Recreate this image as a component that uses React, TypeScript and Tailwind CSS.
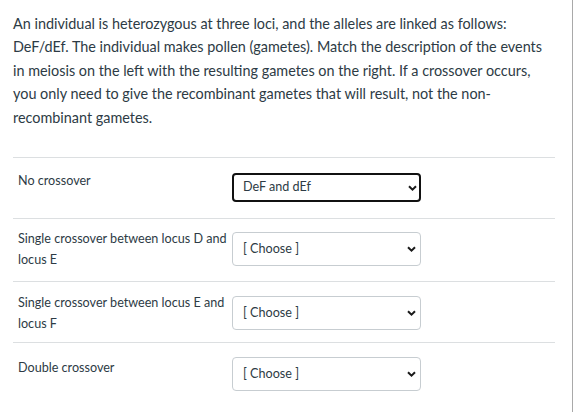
import React from "react";

const Chevron = () => (
  <svg width="9" height="6" viewBox="0 0 9 6" className="shrink-0">
    <path d="M1 1.2 L4.5 4.6 L8 1.2" fill="none" stroke="#1a1a1a" strokeWidth="2" />
  </svg>
);

function Select({ value, focused }: { value: string; focused?: boolean }) {
  return (
    <div
      className={
        focused
          ? "w-[189px] h-[29px] rounded-[4px] border-2 border-[#111] bg-white flex items-center justify-between pl-[9px] pr-[2px] text-[12.6px] text-[#2d3b45]"
          : "w-[189px] h-[34px] rounded-[4px] border border-[#c7cdd1] bg-white flex items-center justify-between pl-[10px] pr-[4px] text-[12.6px] text-[#2d3b45]"
      }
    >
      <span>{value}</span>
      <Chevron />
    </div>
  );
}

export default function App() {
  return (
    <div className="w-[574px] h-[412px] bg-white flex" style={{ fontFamily: "Lato, 'Open Sans', sans-serif" }}>
      <div className="w-[573px] h-full border-r border-[#a9a9a9]">
        <div className="pl-[13px] w-[555px]">
          <p className="pt-[12px] text-[14.4px] leading-[23.4px] text-[#2d3b45]">
            An individual is heterozygous at three loci, and the alleles are linked as follows: DeF/dEf. The individual makes pollen (gametes). Match the description of the events in meiosis on the left with the resulting gametes on the right. If a crossover occurs, you only need to give the recombinant gametes that will result, not the non-recombinant gametes.
          </p>
          <div className="mt-[28px]">
            <div className="border-t border-[#dcdfe1] h-[61px] flex items-start">
              <div className="w-[219px] pl-[5px] pt-[12px] text-[12.6px] leading-[21px] text-[#2d3b45]">No crossover</div>
              <div className="pt-[15px]">
                <Select value="DeF and dEf" focused />
              </div>
            </div>
            <div className="border-t border-[#dcdfe1] h-[63px] flex items-start">
              <div className="w-[219px] pl-[5px] pt-[9px] text-[12.6px] leading-[21px] text-[#2d3b45]">
                Single crossover between locus D and locus E
              </div>
              <div className="pt-[13px]">
                <Select value="[ Choose ]" />
              </div>
            </div>
            <div className="border-t border-[#dcdfe1] h-[61px] flex items-start">
              <div className="w-[219px] pl-[5px] pt-[10px] text-[12.6px] leading-[21px] text-[#2d3b45]">
                Single crossover between locus E and locus F
              </div>
              <div className="pt-[14px]">
                <Select value="[ Choose ]" />
              </div>
            </div>
            <div className="border-t border-[#dcdfe1] flex items-start">
              <div className="w-[219px] pl-[5px] pt-[14px] text-[12.6px] leading-[21px] text-[#2d3b45]">Double crossover</div>
              <div className="pt-[14px]">
                <Select value="[ Choose ]" />
              </div>
            </div>
          </div>
        </div>
      </div>
    </div>
  );
}
